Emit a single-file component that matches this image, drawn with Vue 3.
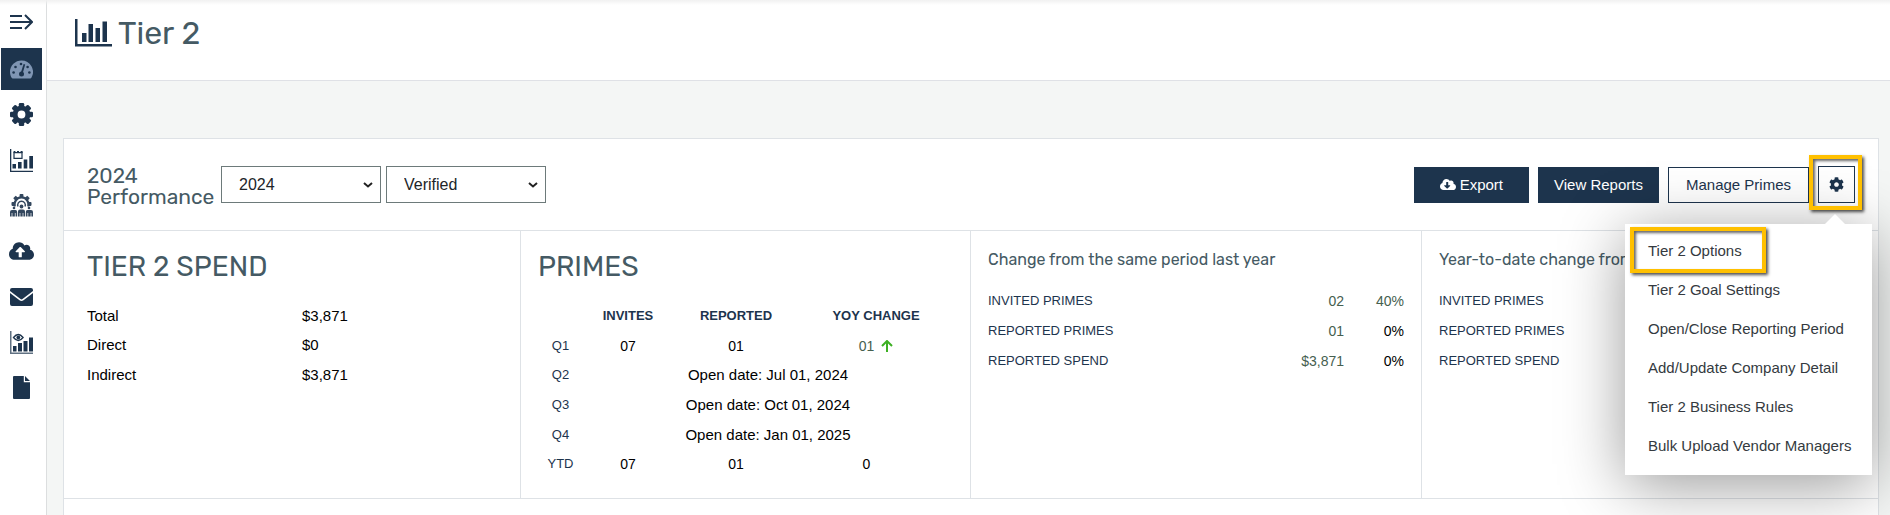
<script setup>
import { ref } from 'vue'

const year = ref('2024')
const status = ref('Verified')

const spend = [
  ['Total', '$3,871'],
  ['Direct', '$0'],
  ['Indirect', '$3,871'],
]

const quarters = [
  { label: 'Q1', invites: '07', reported: '01', change: '01', up: true },
  { label: 'Q2', open: 'Open date: Jul 01, 2024' },
  { label: 'Q3', open: 'Open date: Oct 01, 2024' },
  { label: 'Q4', open: 'Open date: Jan 01, 2025' },
  { label: 'YTD', invites: '07', reported: '01', change: '0', up: false },
]

const changes = [
  {
    title: 'Change from the same period last year',
    rows: [
      { label: 'INVITED PRIMES', value: '02', percent: '40%', muted: true },
      { label: 'REPORTED PRIMES', value: '01', percent: '0%', muted: false },
      { label: 'REPORTED SPEND', value: '$3,871', percent: '0%', muted: false },
    ],
  },
  {
    title: 'Year-to-date change from',
    rows: [
      { label: 'INVITED PRIMES' },
      { label: 'REPORTED PRIMES' },
      { label: 'REPORTED SPEND' },
    ],
  },
]

const menu = [
  'Tier 2 Options',
  'Tier 2 Goal Settings',
  'Open/Close Reporting Period',
  'Add/Update Company Detail',
  'Tier 2 Business Rules',
  'Bulk Upload Vendor Managers',
]

const teeth = [0, 45, 90, 135, 180, 225, 270, 315]
const smallTeeth = [-90, -45, 0, 45, 90]
</script>

<template>
  <div class="app">
    <aside class="sidebar">
      <button class="nav-item toggle" type="button" aria-label="Expand menu">
        <svg width="23" height="16" viewBox="0 0 23 16" fill="none" stroke="currentColor" stroke-width="2">
          <path d="M0 2h12M0 8h21M0 14h12M15 1l7 7-7 7" />
        </svg>
      </button>
      <nav class="nav" aria-label="Main">
        <a class="nav-item active" href="#" aria-label="Dashboard">
          <svg width="23" height="19" viewBox="0 0 23 19">
            <path fill="#7f95b3" d="M11.500 .5A11.500 11.500 0 0 0 0 12c0 2.100.6 4.100 1.600 5.800.3.500.7.700 1.200.7h17.400c.5 0 .9-.2 1.200-.7A11.500 11.500 0 0 0 11.500 .5z" />
            <g fill="#1d344d">
              <circle cx="3.600" cy="12.500" r="1.300" /><circle cx="5.500" cy="7" r="1.300" /><circle cx="11" cy="4" r="1.300" />
              <circle cx="17.600" cy="7" r="1.300" /><circle cx="19.400" cy="12.500" r="1.300" />
              <circle cx="11.500" cy="14" r="2.500" /><path d="M10.600 13.500l3-9.500 1.600.5-2.700 9.500z" />
            </g>
          </svg>
        </a>
        <a class="nav-item" href="#" aria-label="Settings">
          <svg width="23" height="23" viewBox="0 0 23 23" fill="currentColor">
            <rect v-for="a in teeth" :key="a" x="8.800" y="0" width="5.400" height="6" rx="1.200" :transform="`rotate(${a} 11.5 11.5)`" />
            <circle cx="11.500" cy="11.500" r="6.400" fill="none" stroke="currentColor" stroke-width="5" />
          </svg>
        </a>
        <a class="nav-item" href="#" aria-label="Scheduled reports">
          <svg width="23" height="23" viewBox="0 0 23 23" fill="currentColor">
            <path d="M0 0h1.300v21.700H23V23H0z" />
            <path d="M2.500 15h3.500v4.500H2.500zM8 13h3.600v6.500H8zM13.700 10.500h3.600v9h-3.600zM19.300 7H23v12.500h-3.700z" />
            <path fill="none" stroke="currentColor" stroke-width="1.200" d="M4 3.600h8v5.800H4z" />
            <path d="M3.600 2h1.800v2H3.600zM7 2h2v2H7zM10.600 2h2v2h-2z" />
          </svg>
        </a>
        <a class="nav-item" href="#" aria-label="Team management">
          <svg width="23" height="23" viewBox="0 0 23 23" fill="currentColor">
            <g opacity=".9">
              <rect v-for="a in smallTeeth" :key="a" x="9.600" y="0" width="3.800" height="4" rx=".8" :transform="`rotate(${a} 11.5 10)`" />
              <path fill="none" stroke="currentColor" stroke-width="2.200" d="M4.800 12.500a7 7 0 1 1 13.400 0" />
              <path fill="none" stroke="currentColor" stroke-width="1.400" d="M8 12.500a3.800 3.800 0 1 1 7 0" />
              <circle cx="11.500" cy="12.500" r="1.900" /><circle cx="4" cy="14" r="1.300" /><circle cx="19" cy="14" r="1.300" />
              <path d="M0 22.500V18q0-2 2-2h3.500q1.700 0 1.700 2v4.500zM8 22.500V17.500q0-2 2-2h3q2 0 2 2v5zM15.800 22.500V18q0-2 1.700-2H21q2 0 2 2v4.500z" />
            </g>
            <path stroke="#fff" stroke-width=".7" d="M2 19v4M5.300 19v4M10 19v4M13 19v4M17.800 19v4M21 19v4" />
          </svg>
        </a>
        <a class="nav-item" href="#" aria-label="Uploads">
          <svg width="25" height="20" viewBox="0 0 640 512" fill="currentColor">
            <path d="M537.600 226.600c4.100-10.700 6.400-22.400 6.400-34.600 0-53-43-96-96-96-19.700 0-38.100 6-53.300 16.200C367 64.200 315.300 32 256 32c-88.400 0-160 71.600-160 160 0 2.700.1 5.400.2 8.100C40.200 219.800 0 273.200 0 336c0 79.500 64.500 144 144 144h368c70.700 0 128-57.300 128-128 0-61.900-44-113.600-102.400-125.400zM393.400 288H328v112c0 8.800-7.200 16-16 16h-48c-8.800 0-16-7.200-16-16V288h-65.400c-14.300 0-21.400-17.200-11.300-27.300l105.400-105.400c6.200-6.200 16.400-6.200 22.600 0l105.400 105.400c10.100 10.100 2.900 27.300-11.300 27.300z" />
          </svg>
        </a>
        <a class="nav-item" href="#" aria-label="Messages">
          <svg width="23" height="18" viewBox="0 0 23 18" fill="currentColor">
            <path d="M2 0h19a2 2 0 0 1 2 2v1L12.500 11q-1 .8-2 0L0 3V2a2 2 0 0 1 2-2zM0 5l9.500 7.300q2 1.400 4 0L23 5v11a2 2 0 0 1-2 2H2a2 2 0 0 1-2-2z" />
          </svg>
        </a>
        <a class="nav-item" href="#" aria-label="Report views">
          <svg width="23" height="23" viewBox="0 0 23 23" fill="currentColor">
            <path opacity=".7" d="M0 0h1.500v21.500H23V23H0z" />
            <path d="M3 15h3.500v5.500H3zM8 12h4v8.500H8zM13.500 10h4v10.500h-4zM19 6.500h4v14h-4z" />
            <path fill="none" stroke="currentColor" stroke-width="1.300" d="M3.500 6.500q4.700-6 9.600 0-4.900 6-9.600 0z" />
            <circle cx="8.300" cy="6.500" r="1.900" />
          </svg>
        </a>
        <a class="nav-item" href="#" aria-label="Documents">
          <svg width="17" height="23" viewBox="0 0 17 23" fill="currentColor">
            <path d="M1 0h9.800v6.200h6.200V22a1 1 0 0 1-1 1H1a1 1 0 0 1-1-1V1a1 1 0 0 1 1-1zM12 0l5 5h-5z" />
          </svg>
        </a>
      </nav>
    </aside>

    <main class="main">
      <header class="page-head">
        <svg class="page-icon" width="37" height="28" viewBox="0 0 37 28" fill="#1d344d">
          <path d="M0 0h2.500v25H37v2.500H0zM7 14h4.500v9H7zM13.500 5H18v18h-4.500zM20.500 9H25v14h-4.500zM27.500 2.500H32V23h-4.500z" />
        </svg>
        <h1>Tier 2</h1>
      </header>

      <section class="card">
        <div class="card-head">
          <h2 class="perf">2024 Performance</h2>
          <div class="filters">
            <div class="select">
              <select v-model="year" aria-label="Year"><option>2024</option><option>2023</option></select>
              <svg width="10" height="6" viewBox="0 0 10 6"><path d="M1 1l4 3.500L9 1" /></svg>
            </div>
            <div class="select">
              <select v-model="status" aria-label="Status"><option>Verified</option><option>Unverified</option></select>
              <svg width="10" height="6" viewBox="0 0 10 6"><path d="M1 1l4 3.500L9 1" /></svg>
            </div>
          </div>
          <div class="actions">
            <button class="btn solid export" type="button">
              <svg width="16" height="13" viewBox="0 0 640 512" fill="currentColor">
                <path d="M537.600 226.600c4.100-10.700 6.400-22.400 6.400-34.600 0-53-43-96-96-96-19.700 0-38.100 6-53.300 16.200C367 64.200 315.300 32 256 32c-88.400 0-160 71.600-160 160 0 2.700.1 5.400.2 8.100C40.200 219.800 0 273.200 0 336c0 79.500 64.500 144 144 144h368c70.700 0 128-57.300 128-128 0-61.900-44-113.600-102.400-125.400zm-132.900 88.700L299.300 420.700c-6.200 6.200-16.400 6.200-22.600 0L171.300 315.300c-10.100-10.100-2.900-27.300 11.300-27.300H248V176c0-8.800 7.200-16 16-16h48c8.800 0 16 7.200 16 16v112h65.400c14.200 0 21.400 17.200 11.300 27.300z" />
              </svg>
              Export
            </button>
            <button class="btn solid" type="button">View Reports</button>
            <button class="btn outline" type="button">Manage Primes</button>
            <div class="options">
              <button class="btn outline gear" type="button" aria-label="Options" aria-expanded="true">
                <svg width="15" height="15" viewBox="0 0 512 512" fill="currentColor">
                  <path d="M487.400 315.700l-42.600-24.600c4.300-23.200 4.300-47 0-70.200l42.600-24.600c4.900-2.800 7.100-8.600 5.500-14-11.100-35.600-30-67.800-54.700-94.600-3.800-4.100-10-5.100-14.800-2.300L380.800 110c-17.900-15.400-38.500-27.300-60.800-35.100V25.800c0-5.600-3.900-10.500-9.400-11.700-36.700-8.200-74.300-7.800-109.200 0-5.500 1.200-9.400 6.100-9.400 11.700V75c-22.200 7.900-42.800 19.800-60.800 35.100L88.700 85.500c-4.900-2.800-11-1.900-14.800 2.300-24.700 26.700-43.600 58.900-54.700 94.600-1.700 5.400.6 11.200 5.500 14L67.300 221c-4.300 23.200-4.300 47 0 70.200l-42.600 24.600c-4.900 2.800-7.100 8.600-5.500 14 11.100 35.600 30 67.800 54.700 94.600 3.800 4.100 10 5.100 14.800 2.300l42.600-24.600c17.900 15.400 38.500 27.300 60.800 35.100v49.200c0 5.600 3.900 10.500 9.400 11.700 36.700 8.200 74.300 7.800 109.200 0 5.500-1.200 9.400-6.100 9.400-11.700v-49.200c22.200-7.900 42.800-19.800 60.800-35.100l42.600 24.600c4.900 2.800 11 1.900 14.800-2.300 24.700-26.700 43.600-58.900 54.700-94.600 1.500-5.500-.7-11.300-5.600-14.100zM256 336c-44.100 0-80-35.900-80-80s35.900-80 80-80 80 35.900 80 80-35.900 80-80 80z" />
                </svg>
              </button>
              <div class="menu">
                <a v-for="(item, i) in menu" :key="item" href="#" :class="{ marked: i === 0 }">{{ item }}</a>
              </div>
              <span class="marker"></span>
            </div>
          </div>
        </div>

        <div class="panels">
          <section class="panel">
            <h3>TIER 2 SPEND</h3>
            <table class="spend">
              <tbody>
                <tr v-for="row in spend" :key="row[0]"><th scope="row">{{ row[0] }}</th><td>{{ row[1] }}</td></tr>
              </tbody>
            </table>
          </section>

          <section class="panel">
            <h3>PRIMES</h3>
            <table class="primes">
              <colgroup><col class="c1" /><col class="c2" /><col class="c3" /><col /></colgroup>
              <thead>
                <tr><td></td><th scope="col">INVITES</th><th scope="col">REPORTED</th><th scope="col">YOY CHANGE</th></tr>
              </thead>
              <tbody>
                <tr v-for="q in quarters" :key="q.label">
                  <th scope="row">{{ q.label }}</th>
                  <td v-if="q.open" class="open" colspan="3">{{ q.open }}</td>
                  <template v-else>
                    <td>{{ q.invites }}</td>
                    <td>{{ q.reported }}</td>
                    <td>
                      <span class="delta" :class="{ up: q.up }">{{ q.change }}
                        <svg width="12" height="12" viewBox="0 0 12 12"><path v-if="q.up" d="M6 12V2M1 6l5-5 5 5" /></svg>
                      </span>
                    </td>
                  </template>
                </tr>
              </tbody>
            </table>
          </section>

          <section v-for="c in changes" :key="c.title" class="panel change">
            <h4>{{ c.title }}</h4>
            <table>
              <tbody>
                <tr v-for="r in c.rows" :key="r.label">
                  <th scope="row">{{ r.label }}</th>
                  <td class="muted">{{ r.value }}</td>
                  <td class="percent" :class="{ muted: r.muted }">{{ r.percent }}</td>
                </tr>
              </tbody>
            </table>
          </section>
        </div>
        <div class="card-rest"></div>
      </section>
    </main>
  </div>
</template>

<style>
body {
  margin: 0;
}
html {
  overflow: hidden;
}
</style>

<style scoped>
* {
  box-sizing: border-box;
}
.app {
  display: flex;
  min-height: 100vh;
  background: #fff;
  color: #000;
  font: 15px/20px "Liberation Sans", Arial, sans-serif;
}
.app::before {
  content: "";
  position: absolute;
  top: 0;
  left: 0;
  right: 0;
  height: 5px;
  background: linear-gradient(#f1f1f1, rgba(255, 255, 255, 0));
}
.sidebar {
  flex: none;
  width: 47px;
  padding: 1px 0 0 1px;
  border-right: 1px solid #dcdedf;
  color: #1d344d;
}
.nav {
  display: flex;
  flex-direction: column;
  justify-content: space-between;
  height: 361px;
  margin-top: 5px;
}
.nav-item {
  display: flex;
  align-items: center;
  justify-content: center;
  width: 41px;
  height: 42px;
  padding: 0;
  border: 0;
  background: none;
  color: inherit;
}
.nav-item.active {
  background: #1d344d;
}
.main {
  flex: 1;
  min-width: 0;
  background: #f4f6f5;
}
.page-head {
  display: flex;
  align-items: center;
  gap: 6px;
  height: 81px;
  padding: 0 28px 14px;
  border-bottom: 1px solid #dfe1e6;
  background: #fff;
}
h1, h2, h3, h4 {
  margin: 0;
  color: #455a64;
  font-family: Rubik, Roboto, sans-serif;
  font-weight: 400;
}
h1 {
  font-size: 32px;
  line-height: 38px;
}
.card {
  margin: 57px 11px 0 16px;
  border: 1px solid #dee2e6;
  border-bottom: 0;
  background: #fff;
}
.card-head {
  display: flex;
  align-items: center;
  height: 92px;
  padding: 0 23px;
  border-bottom: 1px solid #dee2e6;
}
.perf {
  width: 134px;
  padding-top: 3px;
  font-size: 21px;
  line-height: 21px;
}
.filters {
  display: flex;
  gap: 5px;
}
.select {
  position: relative;
  width: 160px;
}
.select select {
  appearance: none;
  width: 100%;
  height: 37px;
  padding: 0 17px;
  border: 1px solid #6d7a7a;
  border-radius: 0;
  background: #fff;
  color: #212529;
  font: 16px "Liberation Sans", Arial, sans-serif;
}
.select svg {
  position: absolute;
  top: 16px;
  right: 8px;
  fill: none;
  stroke: #222;
  stroke-width: 2;
  pointer-events: none;
}
.actions {
  display: flex;
  align-items: center;
  gap: 9px;
  margin-left: auto;
}
.btn {
  display: flex;
  align-items: center;
  justify-content: center;
  gap: 4px;
  height: 36px;
  padding: 0 16px;
  border: 0;
  color: #fff;
  font: 15px "Liberation Sans", Arial, sans-serif;
  white-space: nowrap;
}
.solid {
  background: #1d344d;
}
.export {
  padding: 0 26px;
}
.outline {
  padding: 0 17px;
  border: 1px solid #1d344d;
  background: none;
  color: #1d344d;
}
.options {
  position: relative;
}
.gear {
  width: 37px;
  height: 37px;
  padding: 0;
}
.marker {
  position: absolute;
  z-index: 4;
  inset: -11px -7px -7px -9px;
  border: 4px solid #ffc000;
  box-shadow: 2px 2px 3px rgba(0, 0, 0, .7), inset 2px 2px 3px rgba(0, 0, 0, .6);
  pointer-events: none;
}
.menu {
  position: absolute;
  z-index: 3;
  top: 58px;
  right: -17px;
  width: 247px;
  padding: 7px 0 10px;
  background: #fff;
  box-shadow: 0 10px 60px rgba(0, 0, 0, .4);
}
.menu::before {
  content: "";
  position: absolute;
  top: -10px;
  right: 27px;
  border: solid transparent;
  border-width: 0 10px 10px;
  border-bottom-color: #fff;
}
.menu a {
  position: relative;
  display: block;
  padding: 0 23px;
  color: #343a40;
  line-height: 39px;
  text-decoration: none;
  white-space: nowrap;
}
.menu .marked::after {
  content: "";
  position: absolute;
  top: -4px;
  bottom: -3px;
  left: 5px;
  width: 128px;
  border: 4px solid #ffc000;
  box-shadow: 2px 2px 3px rgba(0, 0, 0, .7), inset 2px 2px 3px rgba(0, 0, 0, .6);
}
.panels {
  display: grid;
  grid-template-columns: 457fr 450fr 451fr 456fr;
  border-bottom: 1px solid #dee2e6;
}
.panel {
  min-width: 0;
  padding: 18px 17px 19px;
  border-right: 1px solid #dee2e6;
}
.panel:first-child {
  padding-left: 23px;
}
.panel:last-child {
  border-right: 0;
}
h3 {
  font-size: 28px;
  line-height: 36px;
}
h4 {
  font-size: 16px;
  line-height: 22px;
  white-space: nowrap;
}
table {
  width: 100%;
  border-collapse: collapse;
  table-layout: fixed;
}
th, td {
  height: 29px;
  padding: 0;
  font-weight: 400;
}
.spend {
  height: 89px;
  margin-top: 16px;
  text-align: left;
}
.spend th {
  width: 215px;
}
.primes {
  height: 178px;
  margin-top: 16px;
  text-align: center;
  font-size: 14px;
}
.primes .c1 {
  width: 45px;
}
.primes .c2 {
  width: 90px;
}
.primes .c3 {
  width: 126px;
}
.primes th {
  color: #1d344d;
  font-size: 13px;
}
.primes thead th {
  height: 30px;
  font-weight: 700;
}
.primes .open {
  font-size: 15px;
}
.delta {
  display: inline-flex;
  align-items: center;
  gap: 7px;
}
.delta svg {
  fill: none;
  stroke: #3db024;
  stroke-width: 2;
}
.up, .muted {
  color: #46604f;
}
.change table {
  height: 90px;
  margin-top: 15px;
}
.change th {
  color: #1d344d;
  font-size: 13px;
  text-align: left;
}
.change td {
  width: 76px;
  font-size: 14px;
  text-align: right;
}
.change .percent {
  width: 60px;
}
.card-rest {
  height: 16px;
}
</style>
